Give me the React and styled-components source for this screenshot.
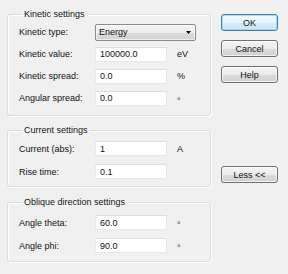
import React from "react";
import styled, { createGlobalStyle } from "styled-components";

const Global = createGlobalStyle`
  html, body { margin: 0; padding: 0; background: #f0f0f0; }
  body { font-family: "Liberation Sans", Arial, sans-serif; font-size: 9px; color: #111; }
`;

const Dialog = styled.div`
  width: 288px;
  height: 274px;
  box-sizing: border-box;
  padding: 9px 0 0 7px;
  display: flex;
  gap: 10px;
  background: #f0f0f0;
`;

const LeftCol = styled.div`
  display: flex;
  flex-direction: column;
  gap: ${(p) => p.$gap}px;
  width: 204px;
`;

const Group = styled.fieldset`
  margin: ${(p) => p.$mt || 0}px 0 0 0;
  padding: ${(p) => p.$pt}px 0 ${(p) => p.$pb}px 11px;
  border: 1px solid #d5dfe5;
  border-radius: 3px;
  min-width: 0;
  box-shadow: inset 1px 1px 0 #fff, 1px 1px 0 #fff;
`;

const Legend = styled.legend`
  padding: 0 2px;
  margin-left: 3px;
  line-height: 11px;
  font-size: 9px;
`;

const Row = styled.div`
  display: flex;
  align-items: center;
  height: ${(p) => p.$h}px;
`;

const Label = styled.span`
  width: 76px;
  white-space: nowrap;
`;

const TextBox = styled.div`
  width: 72px;
  height: 15px;
  box-sizing: border-box;
  background: #fff;
  border: 1px solid #e3e9ef;
  border-top-color: #d9dfe6;
  padding-left: 4px;
  display: flex;
  align-items: center;
`;

const Unit = styled.span`
  margin-left: 10px;
  padding-top: ${(p) => (p.$low ? 5 : 0)}px;
  color: ${(p) => (p.$low ? "#333" : "inherit")};
`;

const Combo = styled.div`
  width: 101px;
  height: 17px;
  box-sizing: border-box;
  border: 1px solid #8a8a8a;
  border-radius: 2px;
  background: linear-gradient(#f4f4f4 0%, #ebebeb 50%, #dddddd 51%, #d3d3d3 100%);
  display: flex;
  align-items: center;
  justify-content: space-between;
  padding: 0 4px 0 3px;
  box-shadow: inset 0 0 0 1px rgba(255, 255, 255, 0.6);
`;

const Arrow = styled.svg`
  width: 5px;
  height: 3px;
  display: block;
`;

const RightCol = styled.div`
  display: flex;
  flex-direction: column;
  padding-top: 5px;
  gap: 9px;
`;

const Button = styled.div`
  width: 57px;
  height: 17px;
  box-sizing: border-box;
  border: 1px solid ${(p) => (p.$default ? "#3c7fb1" : "#707070")};
  border-radius: 3px;
  background: ${(p) =>
    p.$default
      ? "linear-gradient(#f3f9fd 0%, #e7f4fc 50%, #d7ecf9 51%, #c9e5f6 100%)"
      : "linear-gradient(#f4f4f4 0%, #ebebeb 50%, #dddddd 51%, #d0d0d0 100%)"};
  box-shadow: inset 0 0 0 1px ${(p) => (p.$default ? "#a5dcf3" : "rgba(255,255,255,0.7)")};
  display: flex;
  align-items: center;
  justify-content: center;
  margin-top: ${(p) => p.$mt || 0}px;
`;

const Field = ({ label, value, unit, h }) => (
  <Row $h={h}>
    <Label>{label}</Label>
    <TextBox>{value}</TextBox>
    {unit && <Unit $low={unit === "°"}>{unit}</Unit>}
  </Row>
);

export default function App() {
  return (
    <>
      <Global />
      <Dialog>
        <LeftCol $gap={9}>
          <Group $pt={1} $pb={6}>
            <Legend>Kinetic settings</Legend>
            <Row $h={22}>
              <Label>Kinetic type:</Label>
              <Combo>
                <span>Energy</span>
                <Arrow viewBox="0 0 5 3">
                  <path d="M0 0H5L2.5 3Z" fill="#000" />
                </Arrow>
              </Combo>
            </Row>
            <Field h={22} label="Kinetic value:" value="100000.0" unit="eV" />
            <Field h={22} label="Kinetic spread:" value="0.0" unit="%" />
            <Field h={22} label="Angular spread:" value="0.0" unit="°" />
          </Group>
          <Group $pt={1} $pb={3}>
            <Legend>Current settings</Legend>
            <Field h={23} label="Current (abs):" value="1" unit="A" />
            <Field h={23} label="Rise time:" value="0.1" />
          </Group>
          <Group $pt={3} $pb={4} $mt={1}>
            <Legend>Oblique direction settings</Legend>
            <Field h={23} label="Angle theta:" value="60.0" unit="°" />
            <Field h={23} label="Angle phi:" value="90.0" unit="°" />
          </Group>
        </LeftCol>
        <RightCol>
          <Button $default>OK</Button>
          <Button>Cancel</Button>
          <Button>Help</Button>
          <Button $mt={74}>Less &lt;&lt;</Button>
        </RightCol>
      </Dialog>
    </>
  );
}
